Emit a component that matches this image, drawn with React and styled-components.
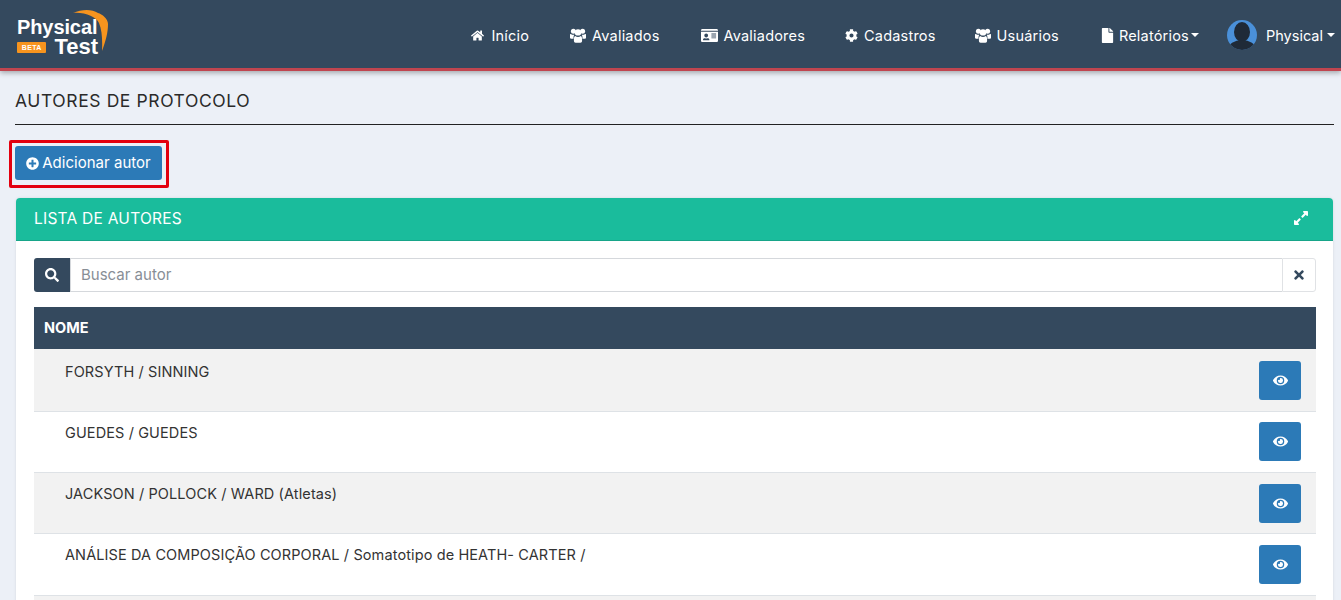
import React from "react";
import styled, { createGlobalStyle } from "styled-components";
import { FaHome, FaIdCard, FaCog, FaFile, FaPlusCircle, FaSearch, FaTimes, FaEye, FaExpandAlt } from "react-icons/fa";

const Global = createGlobalStyle`
  html, body { margin: 0; height: 600px; overflow: hidden; background: #ecf0f7; }
  body { font-family: Inter, "Open Sans", sans-serif; color: #212529; font-size: 14px; }
  * { box-sizing: border-box; }
`;

const Navbar = styled.nav`
  height: 71px;
  background: #34495e;
  border-bottom: 3px solid #c0454f;
  box-shadow: 0 2px 5px rgba(0,0,0,.3);
  display: flex;
  align-items: center;
  padding: 2px 6px 0 17px;
`;
const Logo = styled.div`
  position: relative;
  width: 94px;
  height: 40px;
  margin-top: 3px;
  color: #fff;
  font-family: "Liberation Sans", sans-serif;
  font-weight: 700;
`;
const LogoTop = styled.div`
  font-size: 20px;
  line-height: 20px;
  letter-spacing: -.1px;
`;
const LogoBottom = styled.div`
  display: flex;
  align-items: center;
  justify-content: flex-end;
  gap: 8px;
  padding-right: 13px;
  font-size: 22px;
  line-height: 19px;
`;
const Beta = styled.span`
  background: #f7941e;
  border-radius: 1px;
  font-size: 7px;
  line-height: 11px;
  width: 34px;
  margin-top: 2px;
  text-align: center;
  letter-spacing: .3px;
`;
const Arc = styled.svg`
  position: absolute;
  left: 55px;
  top: -7px;
`;
const NavList = styled.div`
  margin-left: auto;
  display: flex;
  align-items: center;
`;
const NavItem = styled.a`
  display: flex;
  align-items: center;
  gap: ${p => p.$iconGap ?? 6}px;
  color: #fff;
  font-size: 14.5px;
  letter-spacing: ${p => p.$spacing ?? 0.2}px;
  margin-left: ${p => p.$gap}px;
  white-space: nowrap;
  > svg:first-child { font-size: ${p => p.$icon || 14}px; flex: none; }
`;
const Caret = styled.span`
  display: inline-block;
  margin-left: -2px;
  border-top: 4px solid #fff;
  border-left: 4px solid transparent;
  border-right: 4px solid transparent;
`;
const GroupIcon = styled.svg`
  width: 16px;
  height: 15px;
  flex: none;
`;
const Avatar = styled.svg`
  width: 30px;
  height: 30px;
  margin-right: 3px;
  flex: none;
`;
const Content = styled.main`
  padding: 0 7px 0 15px;
`;
const Title = styled.h1`
  margin: 0;
  padding-top: 19px;
  height: 54px;
  font-size: 17.5px;
  line-height: 21px;
  font-weight: 400;
  letter-spacing: .6px;
  border-bottom: 1px solid #222;
  color: #2a2a2a;
`;
const ActionRow = styled.div`
  position: relative;
  padding: 21px 0 18px;
  display: flex;
`;
const AddButton = styled.button`
  height: 34px;
  width: 147px;
  border: 0;
  border-radius: 3px;
  background: #2c7ab7;
  color: #fff;
  font: 15px Inter, sans-serif;
  letter-spacing: .02px;
  display: flex;
  align-items: center;
  justify-content: center;
  gap: 3px;
  padding: 0 0 2px;
  svg { font-size: 13px; margin-top: 2px; }
`;
const Highlight = styled.div`
  position: absolute;
  left: -6px;
  top: 15px;
  width: 160px;
  height: 48px;
  border: 3px solid #e3000f;
  border-radius: 2px;
`;
const Card = styled.section`
  margin: 0 1px 0 1px;
  background: #fff;
  border-radius: 4px 4px 0 0;
  box-shadow: 0 0 3px rgba(0,0,0,.1);
`;
const CardHeader = styled.header`
  height: 43px;
  background: #1abc9c;
  border-radius: 4px 4px 0 0;
  border-bottom: 1px solid #17a589;
  display: flex;
  align-items: center;
  justify-content: space-between;
  padding: 0 24px 2px 18px;
  color: #fff;
  font-size: 15.5px;
  letter-spacing: .25px;
  svg { font-size: 16px; }
`;
const CardBody = styled.div`
  padding: 17px 17px 0 18px;
`;
const SearchGroup = styled.div`
  display: flex;
  height: 34px;
  margin-bottom: 15px;
`;
const SearchIcon = styled.span`
  width: 36px;
  background: #34495e;
  color: #fff;
  border-radius: 3px 0 0 3px;
  display: flex;
  align-items: center;
  justify-content: center;
  font-size: 14px;
`;
const SearchInput = styled.input`
  flex: 1;
  border: 1px solid #d5d8dc;
  border-right: 0;
  outline: 0;
  padding: 0 10px 2px;
  font: 15px Inter, sans-serif;
  color: #333;
  &::placeholder { color: #888e96; opacity: 1; }
`;
const ClearButton = styled.span`
  width: 34px;
  border: 1px solid #e0e2e5;
  border-radius: 0 3px 3px 0;
  display: flex;
  align-items: center;
  justify-content: center;
  color: #34495e;
  font-size: 14px;
`;
const Table = styled.table`
  width: 100%;
  border-collapse: collapse;
`;
const HeadCell = styled.th`
  height: 42px;
  background: #34495e;
  color: #fff;
  text-align: left;
  padding: 0 10px 2px;
  font-size: 14.5px;
  font-weight: 700;
`;
const Row = styled.tr`
  background: ${p => (p.$odd ? "#f2f2f2" : "#fff")};
  border-bottom: 1px solid #dee2e6;
`;
const NameCell = styled.td`
  height: ${p => p.$h}px;
  padding: ${p => p.$top}px 0 0 31px;
  vertical-align: top;
  font-size: 14.5px;
  line-height: 20px;
  letter-spacing: .11px;
  color: #333;
`;
const ActionCell = styled.td`
  width: 60px;
  padding: ${p => (p.$odd ? 2 : 0)}px 15px 0 0;
  vertical-align: middle;
  text-align: right;
`;
const ViewButton = styled.button`
  width: 42px;
  height: 39px;
  border: 0;
  border-radius: 3px;
  background: #2c7ab7;
  color: #fff;
  font-size: 15px;
  padding: 0;
  display: inline-flex;
  align-items: center;
  justify-content: center;
  vertical-align: middle;
`;

const Group = () => (
  <GroupIcon viewBox="0 0 16 15" aria-hidden="true">
    <g fill="#fff">
      <circle cx="3.4" cy="3.2" r="2.5" />
      <circle cx="12.6" cy="3.2" r="2.5" />
      <path d="M0 6.6 C0 6 .6 5.8 1.2 6.2 C2.4 7 3.6 7 4.4 6.6 C3.6 8 3.4 9 3.6 10.8 L1 10.8 C.3 10.8 0 10.4 0 9.6Z" />
      <path d="M16 6.6 C16 6 15.4 5.8 14.8 6.2 C13.6 7 12.4 7 11.6 6.6 C12.4 8 12.6 9 12.4 10.8 L15 10.8 C15.7 10.8 16 10.4 16 9.6Z" />
      <circle cx="8" cy="4.4" r="3.2" />
      <path d="M5.2 8 C6.8 9.2 9.2 9.2 10.8 8 C11.8 8.2 12.1 9.6 12.1 12.6 C12.1 14 11.4 14.8 10.4 14.8 L5.6 14.8 C4.6 14.8 3.9 14 3.9 12.6 C3.9 9.6 4.2 8.2 5.2 8Z" />
    </g>
  </GroupIcon>
);

const links = [
  { label: "Início", icon: <FaHome />, gap: 0, size: 13, iconGap: 7 },
  { label: "Avaliados", icon: <Group />, gap: 41, iconGap: 6 },
  { label: "Avaliadores", icon: <FaIdCard />, gap: 41, size: 17, iconGap: 6 },
  { label: "Cadastros", icon: <FaCog />, gap: 40, size: 13, iconGap: 6 },
  { label: "Usuários", icon: <Group />, gap: 39, iconGap: 6 },
];
const rows = [
  ["FORSYTH / SINNING", 62, 13],
  ["GUEDES / GUEDES", 61, 11],
  ["JACKSON / POLLOCK / WARD (Atletas)", 61, 11],
  ["ANÁLISE DA COMPOSIÇÃO CORPORAL / Somatotipo de HEATH- CARTER /", 62, 11],
  ["", 62, 11],
];

export default function App() {
  return (
    <>
      <Global />
      <Navbar>
        <Logo>
          <LogoTop>Physical</LogoTop>
          <LogoBottom><Beta>BETA</Beta>Test</LogoBottom>
          <Arc width="42" height="46" viewBox="0 0 42 46" aria-hidden="true">
            <path d="M1 3 C10 -1 20 -1 26 3 C30 4 36 9 36 14 C36 22 34 30 30 41 C30.5 30 30 20 27 13 C24 7 13 2 1 3Z" fill="#f7941e" />
          </Arc>
        </Logo>
        <NavList>
          {links.map(l => (
            <NavItem key={l.label} $gap={l.gap} $icon={l.size} $iconGap={l.iconGap}>{l.icon}{l.label}</NavItem>
          ))}
          <NavItem $gap={41} $icon={15} $iconGap={4}><FaFile />Relatórios<Caret /></NavItem>
          <NavItem $gap={28} $spacing={0}>
            <Avatar viewBox="0 0 30 30" aria-hidden="true">
              <defs><clipPath id="av"><circle cx="15" cy="15" r="15" /></clipPath></defs>
              <g clipPath="url(#av)">
                <rect width="30" height="30" fill="#4a90d9" />
                <ellipse cx="15" cy="12" rx="8" ry="10" fill="#1f2a38" />
                <ellipse cx="15" cy="29" rx="14" ry="9" fill="#1f2a38" />
              </g>
            </Avatar>
            Physical<Caret />
          </NavItem>
        </NavList>
      </Navbar>
      <Content>
        <Title>AUTORES DE PROTOCOLO</Title>
        <ActionRow>
          <AddButton><FaPlusCircle />Adicionar autor</AddButton>
          <Highlight />
        </ActionRow>
        <Card>
          <CardHeader>LISTA DE AUTORES<FaExpandAlt /></CardHeader>
          <CardBody>
            <SearchGroup>
              <SearchIcon><FaSearch /></SearchIcon>
              <SearchInput placeholder="Buscar autor" readOnly />
              <ClearButton><FaTimes /></ClearButton>
            </SearchGroup>
            <Table>
              <thead><tr><HeadCell colSpan={2}>NOME</HeadCell></tr></thead>
              <tbody>
                {rows.map(([name, h, top], i) => (
                  <Row key={i} $odd={i % 2 === 0}>
                    <NameCell $h={h} $top={top}>{name}</NameCell>
                    <ActionCell $odd={i % 2 === 0}><ViewButton><FaEye /></ViewButton></ActionCell>
                  </Row>
                ))}
              </tbody>
            </Table>
          </CardBody>
        </Card>
      </Content>
    </>
  );
}
